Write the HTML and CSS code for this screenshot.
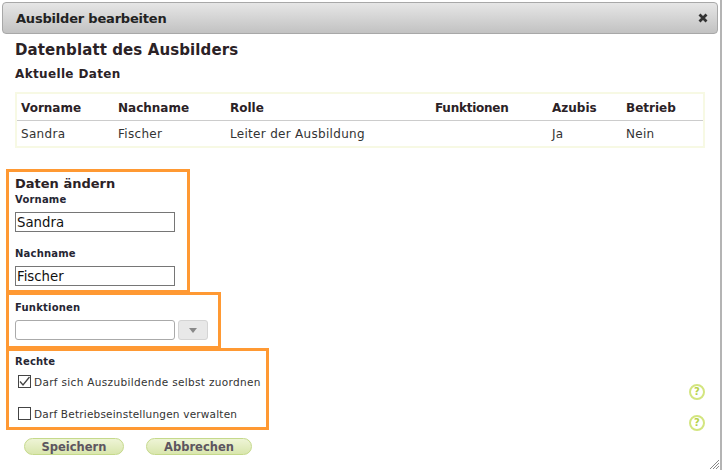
FILE: index.html
```html
<!DOCTYPE html>
<html lang="de">
<head>
<meta charset="utf-8">
<title>Ausbilder bearbeiten</title>
<link rel="stylesheet" href="styles.css">
</head>
<body>
<div class="dialog">
  <header class="titlebar">
    <span class="title">Ausbilder bearbeiten</span>
    <svg class="close" width="10" height="10" viewBox="0 0 10 10"><path d="M1.5 1.5 L8.5 8.5 M8.5 1.5 L1.5 8.5" stroke="#333" stroke-width="2.8" fill="none"/></svg>
  </header>
  <div class="content">
    <h1>Datenblatt des Ausbilders</h1>
    <h2>Aktuelle Daten</h2>
    <table class="data">
      <thead><tr><th class="c1">Vorname</th><th class="c2">Nachname</th><th class="c3">Rolle</th><th class="c4">Funktionen</th><th class="c5">Azubis</th><th>Betrieb</th></tr></thead>
      <tbody><tr><td>Sandra</td><td>Fischer</td><td>Leiter der Ausbildung</td><td></td><td>Ja</td><td>Nein</td></tr></tbody>
    </table>
    <section class="box box-name">
      <h3>Daten ändern</h3>
      <label class="lbl">Vorname</label>
      <input class="txt" type="text" value="Sandra">
      <label class="lbl lbl-next">Nachname</label>
      <input class="txt" type="text" value="Fischer">
    </section>
    <section class="box box-func">
      <label class="lbl">Funktionen</label>
      <div class="combo">
        <input class="txt txt-soft" type="text">
        <span class="arrow"><svg width="8" height="5" viewBox="0 0 8 5"><path d="M0 0H8L4 5Z" fill="#888"/></svg></span>
      </div>
    </section>
    <section class="box box-rights">
      <label class="lbl">Rechte</label>
      <div class="check first">
        <span class="cb"><svg width="13" height="13" viewBox="0 0 13 13"><path d="M2 6.5 L5 10 L11.5 2" stroke="#444" stroke-width="1.3" fill="none"/></svg></span>
        <span>Darf sich Auszubildende selbst zuordnen</span>
      </div>
      <div class="check second">
        <span class="cb"></span>
        <span>Darf Betriebseinstellungen verwalten</span>
      </div>
    </section>
    <div class="actions">
      <button class="btn btn-save">Speichern</button>
      <button class="btn btn-cancel">Abbrechen</button>
    </div>
  </div>
  <span class="help help-a">?</span>
  <span class="help help-b">?</span>
  <svg class="grip" width="10" height="10" viewBox="0 0 10 10"><path d="M1 10L10 1M4 10L10 4M7 10L10 7" stroke="#888" stroke-width="1" fill="none"/></svg>
</div>
</body>
</html>
```
FILE: styles.css
```css
html, body { margin: 0; padding: 0; background: #fff; }
body { width: 722px; height: 470px; overflow: hidden; font-family: "DejaVu Sans", Verdana, sans-serif; color: #2b2226; }
.dialog { position: relative; box-sizing: border-box; width: 722px; height: 470px; padding-top: 2px; border-right: 2px solid #b4b4b4; }
.titlebar { box-sizing: border-box; display: flex; align-items: center; justify-content: space-between; height: 32px; margin-left: 2px; margin-right: 2px; padding: 0 9px 0 13px; border: 1px solid #a8a8a8; border-radius: 4px; background: linear-gradient(#e6e6e6, #c2c2c2); }
.title { font-size: 13px; font-weight: bold; letter-spacing: -0.2px; color: #222; }
.close { display: block; }
.content { padding: 0 0 0 6px; }
h1 { margin: 7px 0 0 9px; font-size: 15px; line-height: 18px; font-weight: bold; letter-spacing: 0.1px; }
h2 { margin: 8px 0 0 9px; font-size: 12px; line-height: 15px; font-weight: bold; letter-spacing: 0.35px; }
.data { box-sizing: border-box; width: 690px; margin: 10px 0 0 9px; border: 2px solid #f7f9e4; border-collapse: separate; border-spacing: 0; font-size: 12px; table-layout: fixed; }
.data th { height: 27px; padding: 2px 0 0 4px; box-sizing: border-box; text-align: left; font-weight: bold; border-bottom: 1px solid #ccc; }
.data td { height: 25px; padding: 0 0 0 4px; color: #333; letter-spacing: 0.3px; }
.data th.c4 { letter-spacing: -0.25px; }
.c1 { width: 97px; } .c2 { width: 112px; } .c3 { width: 205px; } .c4 { width: 117px; } .c5 { width: 74px; }
.box { box-sizing: border-box; border: 3px solid #ff9933; padding-left: 6px; }
.box-name { width: 184px; height: 124px; margin-top: 21px; }
.box-func { width: 215px; height: 57px; margin-top: -1px; }
.box-rights { width: 263px; height: 82px; margin-top: -1px; }
h3 { margin: 4px 0 0; font-size: 13px; line-height: 15px; font-weight: bold; }
.lbl { display: block; font-size: 10px; line-height: 12px; font-weight: bold; letter-spacing: 0.2px; color: #262633; }
.lbl-next { margin-top: 15px; }
.box-name .lbl { margin-top: 3px; margin-bottom: 6px; }
.box-name .lbl-next { margin-top: 16px; margin-bottom: 6px; }
.box-func .lbl { margin-top: 7px; }
.box-rights .lbl { margin-top: 5px; }
.txt { display: block; box-sizing: border-box; width: 160px; height: 20px; margin: 0; padding: 0 1px; border: 1px solid #767676; border-radius: 0; font: 13.3px "DejaVu Sans", sans-serif; color: #111; outline: none; }
.txt-soft { border-color: #aaa; border-radius: 3px; }
.combo { display: flex; align-items: center; gap: 3px; margin-top: 6px; }
.arrow { box-sizing: border-box; display: flex; align-items: center; justify-content: center; width: 30px; height: 20px; border: 1px solid #d4d4d4; border-radius: 3px; background: #e8e8e8; }
.check { display: flex; align-items: center; gap: 3px; margin-left: 3px; font-size: 10.5px; color: #333; }
.first { margin-top: 7px; letter-spacing: 0.33px; }
.second { margin-top: 19px; letter-spacing: 0.2px; }
.cb { box-sizing: border-box; display: block; width: 13px; height: 13px; border: 1px solid #444; background: #fff; flex: none; }
.cb svg { display: block; margin: -1px; }
.actions { display: flex; gap: 22px; margin: 8px 0 0 18px; }
.btn { box-sizing: border-box; height: 17px; padding: 0; border: 1px solid #c5d98b; border-radius: 9px; background: linear-gradient(#eef4d6, #d9e6ad); font: bold 11.5px "DejaVu Sans", sans-serif; color: #5d5560; }
.btn-save { width: 100px; }
.btn-cancel { width: 106px; }
.help { position: absolute; left: 689px; box-sizing: border-box; width: 16px; height: 16px; border: 2px solid #d3e57f; border-radius: 50%; font-size: 10px; line-height: 12px; text-align: center; font-weight: bold; color: #b5d14a; }
.help-a { top: 384px; }
.help-b { top: 415px; }
.grip { position: absolute; right: 1px; bottom: 1px; }
```
